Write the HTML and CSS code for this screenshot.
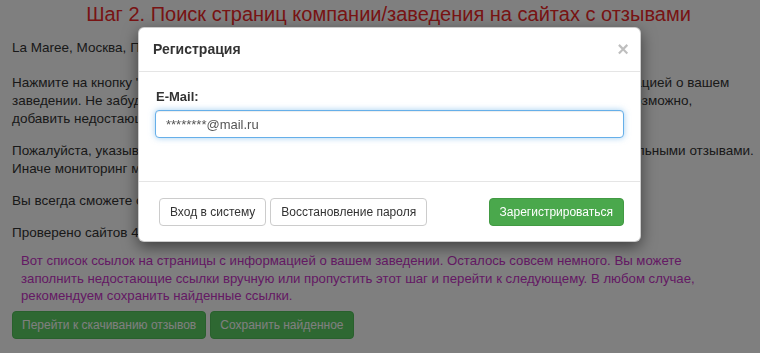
FILE: index.html
```html
<!DOCTYPE html>
<html lang="ru">
<head>
<meta charset="utf-8">
<title>Шаг 2</title>
<link rel="stylesheet" href="styles.css">
</head>
<body>
<div class="page">
  <h1 class="step-title">Шаг 2. Поиск страниц компании/заведения на сайтах с отзывами</h1>
  <p class="place">La Maree, Москва, Петровка, 28/2</p>
  <p class="text">Нажмите на кнопку "Найти", чтобы автоматически найти страницы на сайтах с отзывами с информацией о вашем<br>заведении. Не забудьте внимательно проверить все найденные ссылки, исправить неточности и, возможно,<br>добавить недостающие.</p>
  <p class="text">Пожалуйста, указывайте ссылки только на страницы, которые относятся к вашему ресторану с реальными отзывами.<br>Иначе мониторинг может работать некорректно.</p>
  <p class="text">Вы всегда сможете отредактировать список ссылок позже.</p>
  <p class="text text-last">Проверено сайтов 45 из 45.</p>
  <p class="notice">Вот список ссылок на страницы с информацией о вашем заведении. Осталось совсем немного. Вы можете<br>заполнить недостающие ссылки вручную или пропустить этот шаг и перейти к следующему. В любом случае,<br>рекомендуем сохранить найденные ссылки.</p>
  <div class="actions">
    <button class="btn btn-page">Перейти к скачиванию отзывов</button>
    <button class="btn btn-page">Сохранить найденное</button>
  </div>
</div>

<div class="backdrop"></div>

<div class="modal">
  <div class="modal-header">
    <h4 class="modal-title">Регистрация</h4>
    <span class="close">×</span>
  </div>
  <div class="modal-body">
    <label class="field-label" for="email">E-Mail:</label>
    <input class="field-input" id="email" type="text" value="********@mail.ru">
  </div>
  <div class="modal-footer">
    <div class="footer-left">
      <button class="btn btn-default">Вход в систему</button>
      <button class="btn btn-default">Восстановление пароля</button>
    </div>
    <button class="btn btn-success">Зарегистрироваться</button>
  </div>
</div>
</body>
</html>
```

FILE: styles.css
```css
html, body {
  margin: 0;
  padding: 0;
  background: #fff;
  font-family: "Liberation Sans", Arial, sans-serif;
  color: #333;
  overflow: hidden;
}

.page {
  padding: 0 12px;
  font-size: 13.5px;
  line-height: 18px;
}

.step-title {
  margin: 2px 0 13px;
  font-size: 20px;
  line-height: 24px;
  font-weight: normal;
  text-align: center;
  color: #f02828;
  padding-left: 17px;
}

.place {
  margin: 0 0 17px;
}

.text {
  margin: 0 0 14px;
  white-space: nowrap;
}

.text-last {
  margin-bottom: 10px;
}

.notice {
  margin: 0 0 6px 9px;
  font-size: 13.2px;
  line-height: 17.5px;
  color: #c834c8;
  white-space: nowrap;
}

.actions {
  display: flex;
  gap: 4px;
}

.btn {
  font-family: "Liberation Sans", Arial, sans-serif;
  font-size: 12px;
  line-height: 16px;
  padding: 5px 10px;
  border: 1px solid transparent;
  border-radius: 4px;
  cursor: pointer;
}

.btn-page {
  background: #5cd064;
  border-color: #52c05a;
  color: #fff;
  padding: 5px 9px;
}

.backdrop {
  position: fixed;
  inset: 0;
  background: rgba(0, 0, 0, 0.5);
}

.modal {
  position: absolute;
  left: 138px;
  top: 27px;
  width: 501px;
  background: #fff;
  border: 1px solid rgba(0, 0, 0, 0.2);
  border-radius: 6px;
  box-shadow: 0 5px 15px rgba(0, 0, 0, 0.5);
}

.modal-header {
  display: flex;
  align-items: center;
  justify-content: space-between;
  padding: 12px 14px;
  border-bottom: 1px solid #e5e5e5;
}

.modal-title {
  margin: 0;
  font-size: 14px;
  line-height: 19px;
  font-weight: bold;
  color: #333;
}

.close {
  font-size: 20px;
  line-height: 19px;
  font-weight: bold;
  color: #000;
  opacity: 0.25;
  margin-right: -3px;
}

.modal-body {
  display: flex;
  flex-direction: column;
  padding: 16px 16px 43px;
}

.field-label {
  font-size: 13px;
  line-height: 18px;
  font-weight: bold;
  margin: 0 0 4px 1px;
  color: #333;
}

.field-input {
  height: 28px;
  box-sizing: border-box;
  padding: 4px 10px;
  font-family: "Liberation Sans", Arial, sans-serif;
  font-size: 13px;
  color: #555;
  border: 1px solid #66afe9;
  border-radius: 4px;
  outline: none;
  box-shadow: inset 0 1px 1px rgba(0, 0, 0, 0.075), 0 0 6px rgba(102, 175, 233, 0.6);
}

.modal-footer {
  display: flex;
  justify-content: space-between;
  align-items: center;
  padding: 16px 16px 15px 20px;
  border-top: 1px solid #e5e5e5;
}

.footer-left {
  display: flex;
  gap: 4px;
}

.btn-default {
  background: #fff;
  border-color: #ccc;
  color: #333;
}

.btn-success {
  background: #4aa84c;
  border-color: #429a43;
  color: #fff;
}
```
